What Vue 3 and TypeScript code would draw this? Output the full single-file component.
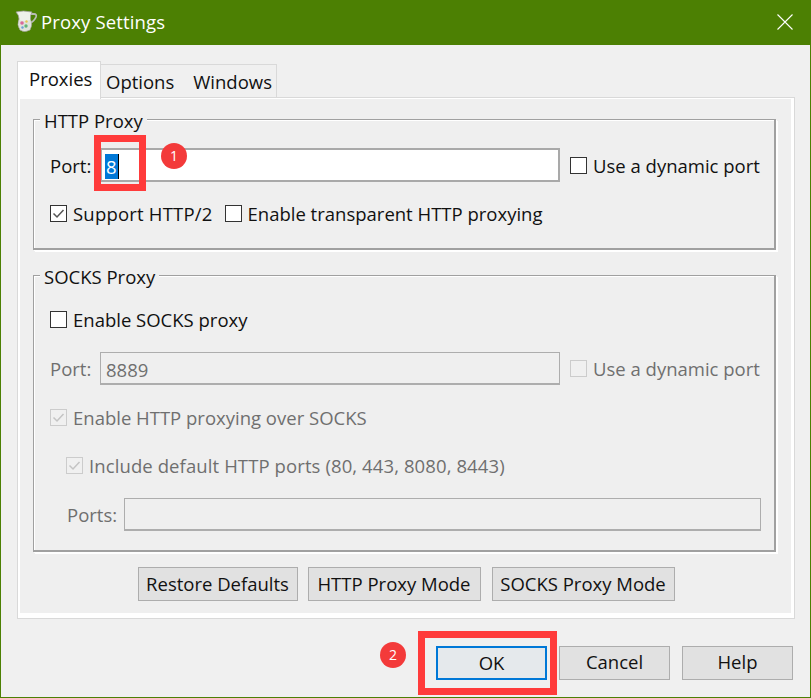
<script setup lang="ts">
const modeButtons = [
  { label: 'Restore Defaults', width: 160 },
  { label: 'HTTP Proxy Mode', width: 173 },
  { label: 'SOCKS Proxy Mode', width: 183 },
]
const footerButtons = ['OK', 'Cancel', 'Help']
</script>

<template>
  <div class="window">
    <header class="titlebar">
      <svg class="app-icon" width="24" height="24" viewBox="0 0 24 24">
        <path d="M16 4 H20 Q23 4 22 7 Q20.5 11 15 14" fill="none" stroke="#b9bdb4" stroke-width="1.8" />
        <path d="M2 2 Q9 0 18 2 Q16 5 16.5 9 Q19 15 16 20 Q10 23 6 20 Q2.5 15 5 9 Q5 5 2 2 Z" fill="#eef0ea" stroke="#9a9d92" stroke-width="0.8" />
        <path d="M5 10 Q10 12 16 10 Q18 15 15.5 19.5 Q10 22 6.5 19.5 Q3.5 15 5 10 Z" fill="#dfe3da" />
        <circle cx="8" cy="13" r="1.8" fill="#d9689a" />
        <circle cx="12" cy="16" r="1.7" fill="#62b478" />
        <circle cx="12.5" cy="11.5" r="1.2" fill="#e6c552" />
        <circle cx="8.5" cy="17.5" r="1.2" fill="#6aa0d8" />
      </svg>
      <span class="title">Proxy Settings</span>
      <svg class="close" width="16" height="16" viewBox="0 0 16 16">
        <path d="M0.5 0.5 L15.5 15.5 M15.5 0.5 L0.5 15.5" stroke="#fff" stroke-width="1.1" fill="none" />
      </svg>
    </header>

    <main class="client">
      <div class="tabs">
        <div class="tab active">Proxies</div>
        <div class="tab-rest">
          <span>Options</span>
          <span>Windows</span>
        </div>
      </div>

      <section class="pane">
        <div class="pane-inner">
          <div class="group http">
            <span class="legend">HTTP Proxy</span>
            <div class="row port-row">
              <label>Port:</label>
              <div class="input"><span class="sel">8</span><span class="caret"></span></div>
              <span class="check"></span>
              <span>Use a dynamic port</span>
            </div>
            <div class="row second">
              <span class="check">
                <svg width="15" height="15" viewBox="0 0 15 15"><path d="M2.5 7.5 L6 11 L12.5 4" fill="none" stroke="#555" stroke-width="1.5" /></svg>
              </span>
              <span class="wider">Support HTTP/2</span>
              <span class="check gap"></span>
              <span>Enable transparent HTTP proxying</span>
            </div>
          </div>

          <div class="group socks">
            <span class="legend">SOCKS Proxy</span>
            <div class="row first">
              <span class="check"></span>
              <span>Enable SOCKS proxy</span>
            </div>
            <div class="row disabled port-row socks-port">
              <label>Port:</label>
              <div class="input off">8889</div>
              <span class="check"></span>
              <span>Use a dynamic port</span>
            </div>
            <div class="row disabled over">
              <span class="check">
                <svg width="15" height="15" viewBox="0 0 15 15"><path d="M2.5 7.5 L6 11 L12.5 4" fill="none" stroke="#c4c4c4" stroke-width="1.5" /></svg>
              </span>
              <span>Enable HTTP proxying over SOCKS</span>
            </div>
            <div class="row disabled include">
              <span class="check">
                <svg width="15" height="15" viewBox="0 0 15 15"><path d="M2.5 7.5 L6 11 L12.5 4" fill="none" stroke="#c4c4c4" stroke-width="1.5" /></svg>
              </span>
              <span class="wide-text">Include default HTTP ports (80, 443, 8080, 8443)</span>
            </div>
            <div class="row disabled ports">
              <label>Ports:</label>
              <div class="input off wide"></div>
            </div>
          </div>

          <div class="mode-buttons">
            <button v-for="b in modeButtons" :key="b.label" class="btn" :style="{ width: b.width + 'px' }">{{ b.label }}</button>
          </div>
        </div>
      </section>

      <footer class="footer">
        <button v-for="b in footerButtons" :key="b" class="btn foot" :class="{ primary: b === 'OK' }">{{ b }}</button>
      </footer>
    </main>

    <!-- annotations on top of the screenshot -->
    <div class="mark mark-port"></div>
    <div class="badge badge-1">1</div>
    <div class="mark mark-ok"></div>
    <div class="badge badge-2">2</div>
  </div>
</template>

<style>
html, body {
  margin: 0;
  background: #f0f0f0;
}
</style>

<style scoped>
.window {
  position: relative;
  box-sizing: border-box;
  width: 811px;
  height: 698px;
  display: flex;
  flex-direction: column;
  background: #f0f0f0;
  border: 1px solid #4c8003;
  border-top: 0;
  font-family: "Open Sans", "Noto Sans", sans-serif;
  font-size: 18.5px;
  color: #111;
  overflow: hidden;
}
.titlebar {
  box-sizing: border-box;
  height: 45px;
  flex: none;
  display: flex;
  align-items: center;
  background: #4c8003;
  color: #fff;
  padding: 0 17px 2px 13px;
}
.app-icon {
  margin-right: 3px;
}
.title {
  flex: 1;
  letter-spacing: 0.15px;
}
.client {
  flex: 1;
  display: flex;
  flex-direction: column;
  padding: 16px 15px 0 16px;
}
.tabs {
  display: flex;
  align-items: flex-end;
  height: 37px;
  position: relative;
  z-index: 1;
  margin-bottom: -1px;
}
.tab {
  box-sizing: border-box;
  height: 38px;
  width: 84px;
  background: #fff;
  border: 1px solid #d9d9d9;
  border-bottom: 0;
  padding: 4px 0 0 11px;
  margin-bottom: -1px;
}
.tab-rest {
  box-sizing: border-box;
  height: 34px;
  width: 177px;
  margin-left: -1px;
  background: #f0f0f0;
  border: 1px solid #d9d9d9;
  display: flex;
  gap: 19px;
  padding: 4px 0 0 5px;
}
.pane {
  box-sizing: border-box;
  width: 778px;
  height: 522px;
  border: 1px solid #d9d9d9;
  background: #fff;
  padding: 1px 3px 5px 2px;
}
.pane-inner {
  height: 100%;
  background: #efefef;
  padding: 20px 0 0 13px;
  box-sizing: border-box;
}
.group {
  position: relative;
  box-sizing: border-box;
  width: 743px;
  background: #efefef;
  border: solid #a0a0a0;
  border-width: 1px 2px 2px 1px;
  box-shadow: inset 1px 1px 0 #fff, 1px 1px 0 #fff, 2px 2px 0 #fff;
  padding: 0 0 0 16px;
}
.http {
  height: 131px;
  margin-bottom: 25px;
}
.socks {
  height: 277px;
}
.legend {
  position: absolute;
  left: 6px;
  top: -12px;
  padding: 0 4px;
  background: #efefef;
  line-height: 26px;
}
.row {
  display: flex;
  align-items: center;
  white-space: nowrap;
}
.wider {
  letter-spacing: 0.2px;
}
.wide-text {
  letter-spacing: 0.1px;
}
.port-row {
  padding-top: 28px;
}
.port-row label {
  width: 50px;
}
.second {
  margin-top: 19px;
}
.check {
  box-sizing: border-box;
  flex: none;
  width: 17px;
  height: 17px;
  border: 1px solid #333;
  background: #fff;
  margin-right: 6px;
  display: flex;
  align-items: center;
  justify-content: center;
}
.check.gap {
  margin-left: 12px;
}
.input {
  box-sizing: border-box;
  width: 460px;
  height: 34px;
  margin-right: 10px;
  background: #fff;
  border: 2px solid #a9a9a9;
  padding: 2px 0 0 3px;
  display: flex;
  align-items: center;
}
.sel {
  background: #0078d7;
  color: #fff;
  line-height: 25px;
  padding: 0 1px;
}
.caret {
  width: 1px;
  height: 25px;
  background: #000;
}
.first {
  padding-top: 31px;
}
.socks-port {
  padding-top: 20px;
}
.disabled {
  color: #6f6f6f;
}
.disabled .check {
  border-color: #ccc;
  background: #f0f0f0;
}
.input.off {
  background: #efefef;
  border: 2px solid #adadad;
  border-width: 1px 1px 2px 1px;
  height: 33px;
  padding-left: 5px;
  color: #6f6f6f;
}
.over {
  margin-top: 20px;
}
.include {
  margin-top: 23px;
  padding-left: 16px;
}
.ports {
  margin-top: 20px;
  padding-left: 17px;
}
.ports label {
  width: 57px;
}
.input.wide {
  width: 637px;
  height: 33px;
  margin: 0;
}
.mode-buttons {
  display: flex;
  justify-content: center;
  gap: 10px;
  margin-top: 15px;
  padding-right: 12px;
}
.mode-buttons .btn:last-child {
  margin-left: 1px;
}
.btn {
  box-sizing: border-box;
  height: 34px;
  padding: 0;
  background: #e1e1e1;
  border: 1px solid #adadad;
  font: inherit;
  color: #111;
  line-height: 30px;
}
.footer {
  display: flex;
  justify-content: flex-end;
  gap: 12px;
  margin-top: 27px;
  padding-right: 2px;
}
.foot {
  width: 111px;
  padding-bottom: 2px;
}
.primary {
  background: #e5e9ec;
  border: 2px solid #0078d7;
}
.mark {
  position: absolute;
  box-sizing: border-box;
  border: 7px solid #ff3b3b;
}
.mark-port {
  left: 93px;
  top: 135px;
  width: 52px;
  height: 56px;
}
.mark-ok {
  left: 417px;
  top: 631px;
  width: 139px;
  height: 64px;
}
.badge {
  position: absolute;
  width: 26px;
  height: 26px;
  border-radius: 50%;
  background: #f33a3a;
  color: #fff;
  font-size: 14px;
  line-height: 26px;
  text-align: center;
}
.badge-1 {
  left: 160px;
  top: 143px;
}
.badge-2 {
  left: 379px;
  top: 642px;
}
</style>
